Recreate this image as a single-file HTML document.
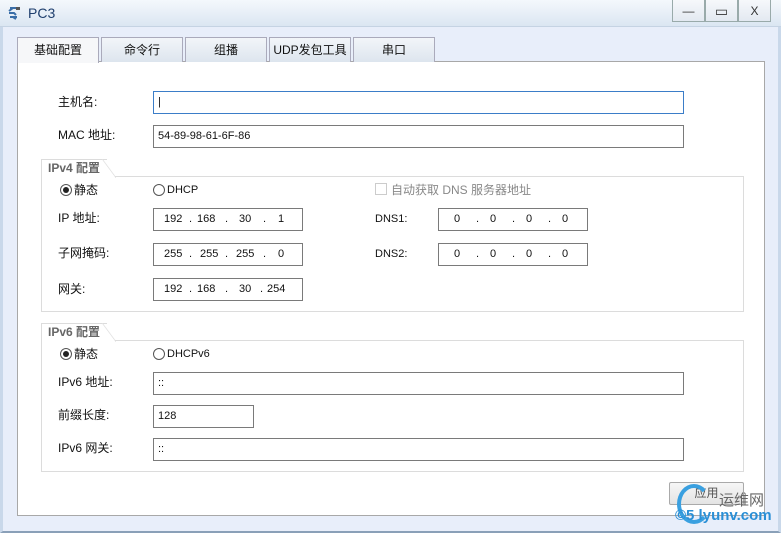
<!DOCTYPE html>
<html><head><meta charset="utf-8"><style>
*{margin:0;padding:0;box-sizing:border-box}
body{width:781px;height:533px;position:relative;overflow:hidden;background:#e8eef9;font-family:"Liberation Sans","Noto Sans CJK SC",sans-serif;font-size:12px;color:#111}
.a{position:absolute}
.title{left:0;top:0;width:781px;height:27px;background:linear-gradient(#f4f8fc,#dbe6f2);border-bottom:1px solid #c5d3e3}
.frame{left:0;top:27px;width:781px;height:506px;border:3px solid #c9d8ea;border-top:none;border-bottom:2px solid #8aa0b8;background:#e8eefa}
.panel{left:17px;top:61px;width:748px;height:455px;background:#fff;border:1px solid #a8a8a8}
.tab{top:37px;height:25px;width:82px;border:1px solid #aab;border-bottom:none;background:linear-gradient(#f2f5f9,#dde5ee);text-align:center;line-height:24px;font-size:12px}
.inp{border:1px solid #7a7a7a;background:#fff;height:23px;font-size:11px;line-height:21px;padding-left:4px}
.lbl{font-size:12px;line-height:14px}
.grp{border:1px solid #dcdcdc}
.gt{height:18px;border-top:1px solid #dcdcdc;border-left:1px solid #dcdcdc;background:#fff;font-size:12px;font-weight:bold;color:#666;padding-left:6px;line-height:17px}
.gt:after{content:"";position:absolute;right:-9px;top:-1px;width:14px;height:19px;background:linear-gradient(to top right,#fff 48%,#dcdcdc 50%,transparent 54%)}
.rad{width:12px;height:12px;border:1px solid #555;border-radius:50%}
.btn{width:33px;height:22px;border:1px solid #9aa;border-top:none;background:linear-gradient(#f6f8fb,#e3e9f1);text-align:center;font-size:12px;line-height:22px;color:#333}
.ip span{position:absolute;top:0;font-size:11px}
</style></head><body>
<div class="a title"></div>
<div class="a frame"></div>
<svg class="a" style="left:7px;top:5px" width="16" height="16"><path d="M3 3h6M2 6l4-3M2 8h5l2 2M3 12h7M6 12l3 2" stroke="#3a6ea8" stroke-width="2" fill="none"/><rect x="9" y="2" width="4" height="3" fill="#555"/></svg>
<div class="a" style="left:28px;top:5px;font-size:14px;color:#1f3f6e">PC3</div>
<div class="a btn" style="left:672px;top:0">—</div>
<div class="a btn" style="left:705px;top:0;font-size:14px">▭</div>
<div class="a btn" style="left:738px;top:0">X</div>
<div class="a panel"></div>
<div class="a tab" style="left:17px;background:#f6f7f9;height:26px">基础配置</div>
<div class="a tab" style="left:101px">命令行</div>
<div class="a tab" style="left:185px">组播</div>
<div class="a tab" style="left:269px">UDP发包工具</div>
<div class="a tab" style="left:353px">串口</div>

<div class="a lbl" style="left:58px;top:95px">主机名:</div>
<div class="a inp" style="left:153px;top:91px;width:531px;border-color:#3b7dc8">|</div>
<div class="a lbl" style="left:58px;top:128px">MAC 地址:</div>
<div class="a inp" style="left:153px;top:125px;width:531px">54-89-98-61-6F-86</div>

<div class="a grp" style="left:41px;top:176px;width:703px;height:136px"></div>
<div class="a gt" style="left:41px;top:159px;width:66px">IPv4 配置</div>
<div class="a rad" style="left:60px;top:184px"><div class="a" style="left:2px;top:2px;width:6px;height:6px;border-radius:50%;background:#222"></div></div>
<div class="a lbl" style="left:74px;top:183px">静态</div>
<div class="a rad" style="left:153px;top:184px"></div>
<div class="a lbl" style="left:167px;top:183px;font-size:11px">DHCP</div>
<div class="a" style="left:375px;top:183px;width:12px;height:12px;border:1px solid #ccc"></div>
<div class="a lbl" style="left:391px;top:183px;color:#888">自动获取 DNS 服务器地址</div>
<div class="a lbl" style="left:58px;top:211px">IP 地址:</div>
<div class="a inp ip" style="left:153px;top:208px;width:150px"><span style="left:10px">192</span><span style="left:35px">.</span><span style="left:43px">168</span><span style="left:71px">.</span><span style="left:85px">30</span><span style="left:109px">.</span><span style="left:124px">1</span></div>
<div class="a lbl" style="left:58px;top:246px">子网掩码:</div>
<div class="a inp ip" style="left:153px;top:243px;width:150px"><span style="left:10px">255</span><span style="left:35px">.</span><span style="left:46px">255</span><span style="left:71px">.</span><span style="left:82px">255</span><span style="left:109px">.</span><span style="left:124px">0</span></div>
<div class="a lbl" style="left:58px;top:282px">网关:</div>
<div class="a inp ip" style="left:153px;top:278px;width:150px"><span style="left:10px">192</span><span style="left:35px">.</span><span style="left:43px">168</span><span style="left:71px">.</span><span style="left:85px">30</span><span style="left:106px">.</span><span style="left:113px">254</span></div>
<div class="a lbl" style="left:375px;top:212px;font-size:11px">DNS1:</div>
<div class="a inp ip" style="left:438px;top:208px;width:150px"><span style="left:15px">0</span><span style="left:37px">.</span><span style="left:51px">0</span><span style="left:73px">.</span><span style="left:87px">0</span><span style="left:109px">.</span><span style="left:123px">0</span></div>
<div class="a lbl" style="left:375px;top:247px;font-size:11px">DNS2:</div>
<div class="a inp ip" style="left:438px;top:243px;width:150px"><span style="left:15px">0</span><span style="left:37px">.</span><span style="left:51px">0</span><span style="left:73px">.</span><span style="left:87px">0</span><span style="left:109px">.</span><span style="left:123px">0</span></div>

<div class="a grp" style="left:41px;top:340px;width:703px;height:132px"></div>
<div class="a gt" style="left:41px;top:323px;width:66px">IPv6 配置</div>
<div class="a rad" style="left:60px;top:348px"><div class="a" style="left:2px;top:2px;width:6px;height:6px;border-radius:50%;background:#222"></div></div>
<div class="a lbl" style="left:74px;top:347px">静态</div>
<div class="a rad" style="left:153px;top:348px"></div>
<div class="a lbl" style="left:167px;top:347px;font-size:11px">DHCPv6</div>
<div class="a lbl" style="left:58px;top:375px">IPv6 地址:</div>
<div class="a inp" style="left:153px;top:372px;width:531px">::</div>
<div class="a lbl" style="left:58px;top:408px">前缀长度:</div>
<div class="a inp" style="left:153px;top:405px;width:101px">128</div>
<div class="a lbl" style="left:58px;top:441px">IPv6 网关:</div>
<div class="a inp" style="left:153px;top:438px;width:531px">::</div>

<div class="a" style="left:669px;top:482px;width:75px;height:23px;border:1px solid #aaa;border-radius:2px;background:linear-gradient(#f6f6f6,#e4e4e4);text-align:center;line-height:21px;color:#555">应用</div>
<div class="a" style="left:677px;top:484px;width:34px;height:40px;border:4px solid #3aa0e0;border-radius:50%;border-right-color:transparent"></div>
<div class="a" style="left:719px;top:489px;font-size:15px;color:#666">运维网</div>
<div class="a" style="left:675px;top:507px;font-size:15px;color:#2a8fd6;font-weight:bold">©5 lyunv.com</div>
</body></html>
